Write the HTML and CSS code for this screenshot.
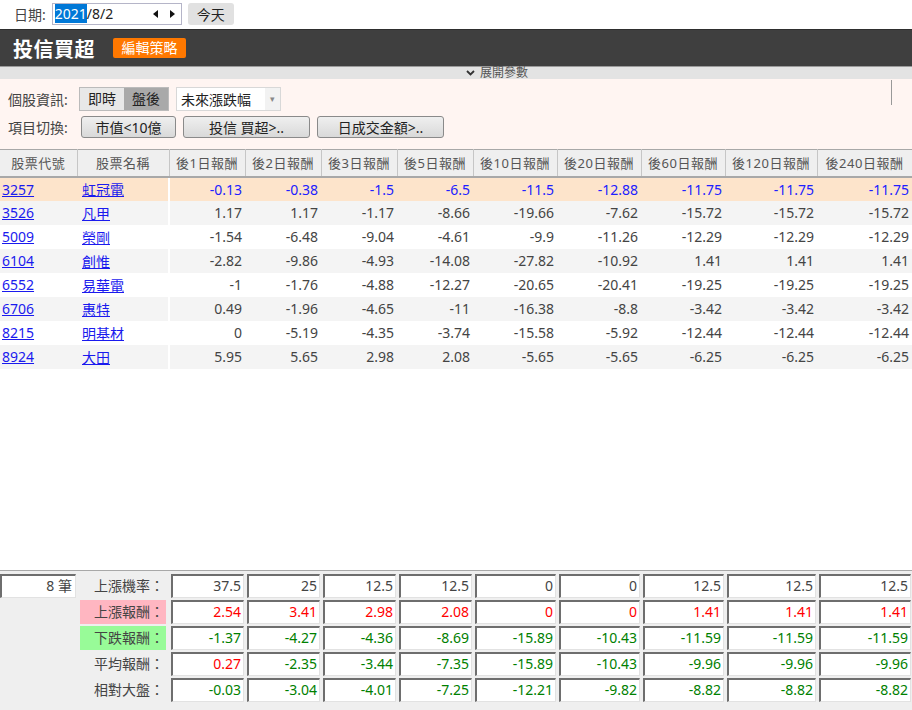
FILE: index.html
```
<!DOCTYPE html>
<html lang="zh-Hant">
<head>
    <meta charset="UTF-8">
    <title>投信買超</title>
    <link rel="stylesheet" href="styles.css">
</head>
<body>
    <div class="datebar">
        <span class="date-label">日期:</span>
        <div class="date-input">
            <span class="sel">2021</span>/8/2
            <span class="spin">
                <svg width="6" height="8" viewBox="0 0 6 8"><path d="M5 0 L0 4 L5 8 Z" fill="#111"/></svg>
                <svg width="6" height="8" viewBox="0 0 6 8"><path d="M1 0 L6 4 L1 8 Z" fill="#111"/></svg>
            </span>
        </div>
        <button class="today">今天</button>
    </div>

    <div class="titlebar">
        <h1>投信買超</h1>
        <button class="edit-btn">編輯策略</button>
    </div>

    <div class="expand">
        <svg width="9" height="6" viewBox="0 0 9 6"><path d="M1 1 L4.5 4.5 L8 1" fill="none" stroke="#333" stroke-width="1.8"/></svg>
        <span>展開參數</span>
    </div>

    <div class="params">
        <div class="param-row">
            <span class="param-label">個股資訊:</span>
            <div class="toggle">
                <span>即時</span>
                <span class="on">盤後</span>
            </div>
            <div class="select">
                <span>未來漲跌幅</span>
                <span class="arrow">&#9662;</span>
            </div>
        </div>
        <div class="param-row row2">
            <span class="param-label">項目切換:</span>
            <button class="opt w1">市值&lt;10億</button>
            <button class="opt w2">投信 買超&gt;..</button>
            <button class="opt w2">日成交金額&gt;..</button>
        </div>
        <div class="vline"></div>
    </div>

    <table class="grid">
        <thead>
            <tr>
                <th>股票代號</th><th>股票名稱</th><th>後1日報酬</th><th>後2日報酬</th><th>後3日報酬</th>
                <th>後5日報酬</th><th>後10日報酬</th><th>後20日報酬</th><th>後60日報酬</th>
                <th>後120日報酬</th><th>後240日報酬</th>
            </tr>
        </thead>
        <tbody id="rows"></tbody>
    </table>

    <div class="spacer"></div>

    <div class="summary" id="summary"></div>

    <script>
        const stocks = [
            ["3257", "虹冠電", -0.13, -0.38, -1.5, -6.5, -11.5, -12.88, -11.75, -11.75, -11.75],
            ["3526", "凡甲", 1.17, 1.17, -1.17, -8.66, -19.66, -7.62, -15.72, -15.72, -15.72],
            ["5009", "榮剛", -1.54, -6.48, -9.04, -4.61, -9.9, -11.26, -12.29, -12.29, -12.29],
            ["6104", "創惟", -2.82, -9.86, -4.93, -14.08, -27.82, -10.92, 1.41, 1.41, 1.41],
            ["6552", "易華電", -1, -1.76, -4.88, -12.27, -20.65, -20.41, -19.25, -19.25, -19.25],
            ["6706", "惠特", 0.49, -1.96, -4.65, -11, -16.38, -8.8, -3.42, -3.42, -3.42],
            ["8215", "明基材", 0, -5.19, -4.35, -3.74, -15.58, -5.92, -12.44, -12.44, -12.44],
            ["8924", "大田", 5.95, 5.65, 2.98, 2.08, -5.65, -5.65, -6.25, -6.25, -6.25]
        ];

        const stats = [
            { label: "上漲機率：", cls: "", color: "plain", vals: [37.5, 25, 12.5, 12.5, 0, 0, 12.5, 12.5, 12.5] },
            { label: "上漲報酬：", cls: "pink", color: "up", vals: [2.54, 3.41, 2.98, 2.08, 0, 0, 1.41, 1.41, 1.41] },
            { label: "下跌報酬：", cls: "green", color: "down", vals: [-1.37, -4.27, -4.36, -8.69, -15.89, -10.43, -11.59, -11.59, -11.59] },
            { label: "平均報酬：", cls: "", color: "sign", vals: [0.27, -2.35, -3.44, -7.35, -15.89, -10.43, -9.96, -9.96, -9.96] },
            { label: "相對大盤：", cls: "", color: "down", vals: [-0.03, -3.04, -4.01, -7.25, -12.21, -9.82, -8.82, -8.82, -8.82] }
        ];

        const tbody = document.getElementById('rows');
        stocks.forEach(function(s, i) {
            const tr = document.createElement('tr');
            if (i === 0) tr.className = 'picked';
            let html = '<td class="code"><a href="#">' + s[0] + '</a></td>';
            html += '<td class="name"><a href="#">' + s[1] + '</a></td>';
            for (let k = 2; k < s.length; k++) {
                html += '<td class="num">' + s[k] + '</td>';
            }
            tr.innerHTML = html;
            tbody.appendChild(tr);
        });

        const summary = document.getElementById('summary');
        stats.forEach(function(row, i) {
            let html = i === 0 ? '<div class="box count">8 筆</div>' : '<div></div>';
            html += '<div class="stat-label ' + row.cls + '">' + row.label + '</div>';
            row.vals.forEach(function(v) {
                let c = row.color;
                if (c === 'sign') c = v > 0 ? 'up' : 'down';
                html += '<div class="box ' + c + '">' + v + '</div>';
            });
            summary.insertAdjacentHTML('beforeend', html);
        });
    </script>
</body>
</html>
```

FILE: styles.css
```
* {
    box-sizing: border-box;
}

body {
    margin: 0;
    width: 912px;
    height: 710px;
    display: flex;
    flex-direction: column;
    font-family: "Noto Sans", "Noto Sans CJK TC", sans-serif;
    font-size: 14px;
    color: #333;
    background: #fff;
    overflow: hidden;
}

button {
    font-family: inherit;
    cursor: pointer;
}

/* date line */
.datebar {
    height: 29px;
    display: flex;
    align-items: center;
    padding-left: 14px;
    padding-bottom: 2px;
}

.date-label {
    color: #444;
    font-size: 14px;
    margin-right: 6px;
}

.date-input {
    width: 130px;
    height: 22px;
    border: 1px solid #b5b5c8;
    display: flex;
    align-items: center;
    padding-left: 2px;
    font-size: 14px;
    color: #222;
    background: #fff;
}

.date-input .sel {
    background: #0078d7;
    color: #fff;
}

.date-input .spin {
    margin-left: auto;
    margin-right: 6px;
    display: flex;
    gap: 10px;
}

.today {
    margin-left: 6px;
    width: 46px;
    height: 22px;
    border: none;
    border-radius: 3px;
    background: #e1e1e1;
    font-size: 14px;
    color: #222;
    padding: 0;
}

/* title bar */
.titlebar {
    height: 37px;
    background: #3f3f3f;
    border-top: 1px solid #2e2e2e;
    display: flex;
    align-items: center;
    padding-left: 13px;
}

.titlebar h1 {
    margin: 0;
    color: #fff;
    font-size: 20px;
    font-weight: bold;
    letter-spacing: 0.5px;
}

.edit-btn {
    margin-left: 18px;
    width: 73px;
    height: 20px;
    border: none;
    border-radius: 2px;
    background: #ff7800;
    color: #fff;
    font-size: 14px;
    line-height: 20px;
    padding: 0;
}

.expand {
    height: 13px;
    background: #e3e3e3;
    border-top: 1px solid #9a9a9a;
    display: flex;
    align-items: center;
    justify-content: center;
    gap: 5px;
    padding-left: 82px;
    font-size: 12px;
    line-height: 12px;
    color: #555;
}

/* params panel */
.params {
    position: relative;
    background: #fff5f2;
    padding: 8px 0 10px 8px;
    height: 70px;
}

.param-row {
    display: flex;
    align-items: center;
    height: 24px;
}

.row2 {
    margin-top: 5px;
    height: 22px;
}

.param-label {
    width: 71px;
    color: #444;
    font-size: 14px;
}

.toggle {
    display: flex;
    height: 24px;
    border: 1px solid #bbb;
}

.toggle span {
    width: 44px;
    line-height: 22px;
    text-align: center;
    background: #e8e8e8;
    color: #222;
}

.toggle .on {
    background: #a9a9a9;
}

.select {
    margin-left: 7px;
    width: 105px;
    height: 24px;
    border: 1px solid #d8d8d8;
    background: #fff;
    display: flex;
    align-items: center;
    padding-left: 4px;
    color: #222;
}

.select .arrow {
    margin-left: auto;
    width: 15px;
    height: 22px;
    line-height: 22px;
    text-align: center;
    background: #f2f2f2;
    color: #888;
    font-size: 9px;
}

.opt {
    height: 22px;
    margin-left: 2px;
    margin-right: 5px;
    border: 1px solid #8a8a8a;
    border-radius: 3px;
    background: linear-gradient(#efefef, #d9d9d9);
    color: #222;
    font-size: 14px;
    padding: 0;
}

.w1 {
    width: 95px;
}

.w2 {
    width: 127px;
}

.vline {
    position: absolute;
    left: 891px;
    top: 1px;
    width: 1px;
    height: 25px;
    background: #999;
}

/* main table */
.grid {
    border-collapse: collapse;
    table-layout: fixed;
    width: 912px;
}

.grid th {
    height: 27px;
    background: #efefef;
    border-top: 1px solid #a8a8a8;
    border-bottom: 2px solid #a8a8a8;
    border-right: 1px solid #c6c6c6;
    color: #555;
    font-size: 13px;
    font-weight: normal;
    letter-spacing: 0.5px;
    padding: 0;
}

.grid th:nth-child(1) { width: 77px; }
.grid th:nth-child(2) { width: 92px; }
.grid th:nth-child(3),
.grid th:nth-child(4),
.grid th:nth-child(5),
.grid th:nth-child(6) { width: 76px; }
.grid th:nth-child(7),
.grid th:nth-child(8),
.grid th:nth-child(9) { width: 84px; }
.grid th:nth-child(10) { width: 92px; }
.grid th:nth-child(11) { width: 95px; }

.grid td {
    height: 24px;
    padding: 0;
    font-size: 14px;
    color: #444;
}

.grid tbody tr:nth-child(even) {
    background: #f4f4f4;
}

.grid tbody tr.picked {
    background: #fde4cb;
}

.grid tr.picked .num {
    color: #2020ff;
}

.grid a {
    color: #1a1aee;
    text-decoration: underline;
}

.code {
    padding-left: 2px !important;
}

.name {
    padding-left: 5px !important;
    border-right: 2px solid #fff;
}

.num {
    text-align: right;
    padding-right: 3px !important;
}

.spacer {
    flex: 1;
}

/* summary */
.summary {
    height: 140px;
    background: #efefef;
    border-top: 1px solid #a8a8a8;
    padding-top: 3px;
    display: grid;
    grid-template-columns: 77px 92px 76px 76px 76px 76px 84px 84px 84px 92px 95px;
    grid-auto-rows: 24px;
    row-gap: 2px;
}

.box {
    margin: 0 1px 0 2px;
    background: #fff;
    border-style: solid;
    border-width: 2px 1px 1px 2px;
    border-color: #6e6e6e #e2e2e2 #e2e2e2 #6e6e6e;
    text-align: right;
    padding-right: 2px;
    line-height: 20px;
    font-size: 14px;
}

.count {
    margin: 0 1px 0 0;
    color: #444;
    padding-right: 3px;
}

.stat-label {
    margin: 0 3px 0 3px;
    text-align: right;
    line-height: 24px;
    color: #444;
    padding-right: 2px;
}

.stat-label.pink {
    background: #ffb6c1;
}

.stat-label.green {
    background: #98fb98;
}

.plain {
    color: #444;
}

.up {
    color: #ff0000;
}

.down {
    color: #008000;
}
```
